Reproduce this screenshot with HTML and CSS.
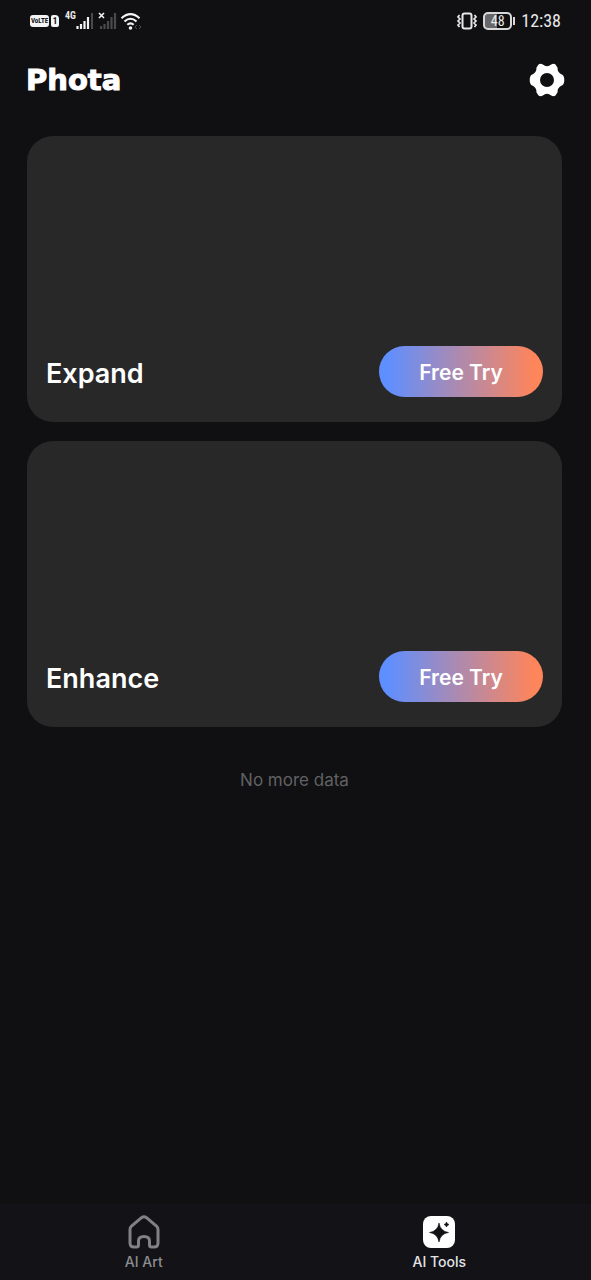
FILE: index.html
```html
<!DOCTYPE html>
<html lang="en">
<head>
<meta charset="utf-8">
<meta name="viewport" content="width=device-width, initial-scale=1">
<title>Phota</title>
<link rel="stylesheet" href="styles.css">
</head>
<body>
<div class="app">
  <div class="status">
    <div class="status-group">
      <span class="volte">VoLTE</span>
      <span class="sim">1</span>
      <span class="network">4G</span>
      <svg class="signal" width="18" height="18" viewBox="0 0 18 18" aria-hidden="true">
        <path d="M1.500 14v3M5 12v5M8.500 9v8M12 5v12" stroke="#f4f4f4" stroke-width="2.200"/>
        <path d="M16 1v16" stroke="#4a4a4b" stroke-width="2"/>
      </svg>
      <svg class="no-signal" width="20" height="18" viewBox="0 0 20 18" aria-hidden="true">
        <path d="M3 14v3M6.500 12v5M10 9v8M13.500 5v12M17 1v16" stroke="#4a4a4b" stroke-width="2.200"/>
        <path d="M1 1l5 5M6 1l-5 5" stroke="#f4f4f4" stroke-width="1.600"/>
      </svg>
      <svg width="22" height="18" viewBox="0 0 22 18" aria-hidden="true">
        <path d="M1.500 6.200Q10.500-2 19.500 6.200M4.500 9.500Q10.500 4 16.500 9.500M7.300 12.800Q10.500 10 13.700 12.800" fill="none" stroke="#f4f4f4" stroke-width="2.100"/>
        <circle cx="10.500" cy="16" r="1.800" fill="#f4f4f4"/>
        <path d="M17 13l-2 2 2 2M19 13l2 2-2 2" fill="none" stroke="#4a4a4b"/>
      </svg>
    </div>
    <div class="status-group">
      <svg width="22" height="18" viewBox="0 0 22 18" aria-hidden="true">
        <rect x="6.500" y="1.500" width="9" height="15" rx="2" fill="none" stroke="#e8e8e8" stroke-width="2"/>
        <path d="M3.500 3L2 5l2 2-2 2 2 2-2 2 1.500 2M18.500 3L20 5l-2 2 2 2-2 2 2 2-1.500 2" fill="none" stroke="#e8e8e8" stroke-width="1.700"/>
      </svg>
      <span class="battery"><span class="battery-level">48</span></span>
      <span class="clock">12:38</span>
    </div>
  </div>

  <header class="header">
    <h1 class="logo">Phota</h1>
    <button class="settings" type="button" aria-label="Settings">
      <svg width="36" height="36" viewBox="0 0 36 36" aria-hidden="true">
        <path fill="#fff" fill-rule="evenodd" d="M9.500 2.600Q11.400 1 13.800 2.600Q18 6 22.200 2.600Q24.600 1 26.500 2.600L28.600 5.800Q28 10.500 33.300 12.800Q35.300 14 35.300 18Q35.300 22 33.300 23.200Q28 25.500 28.600 30.200L26.500 33.400Q24.600 35 22.200 33.400Q18 30 13.800 33.400Q11.400 35 9.500 33.400L7.400 30.200Q8 25.500 2.700 23.200Q.7 22 .7 18Q.7 14 2.700 12.800Q8 10.500 7.400 5.800ZM18 11a7 7 0 1 0 0 14a7 7 0 1 0 0-14Z"/>
      </svg>
    </button>
  </header>

  <main class="tools">
    <section class="card">
      <h2 class="card-title">Expand</h2>
      <button class="try" type="button">Free Try</button>
    </section>
    <section class="card">
      <h2 class="card-title">Enhance</h2>
      <button class="try" type="button">Free Try</button>
    </section>
    <p class="end">No more data</p>
  </main>

  <nav class="tabs">
    <a class="tab" href="#art">
      <svg width="34" height="34" viewBox="0 0 34 34" aria-hidden="true">
        <path d="M3 14.500Q3 12.500 4.500 11.200L14.500 2.700Q17 .8 19.500 2.700L29.500 11.200Q31 12.500 31 14.500V28Q31 32 27 32H24.500Q22.500 32 22.500 30V26Q22.500 21.500 17 21.500Q11.500 21.500 11.500 26V30Q11.500 32 9.500 32H7Q3 32 3 28Z" fill="none" stroke="#818183" stroke-width="3"/>
      </svg>
      <span>AI Art</span>
    </a>
    <a class="tab tab-active" href="#tools" aria-current="page">
      <svg width="34" height="34" viewBox="0 0 34 34" aria-hidden="true">
        <rect x="1" y="1" width="32" height="32" rx="8" fill="#fff"/>
        <path d="M17 8Q18.300 16.200 26.500 17.500Q18.300 18.800 17 27Q15.700 18.800 7.500 17.500Q15.700 16.200 17 8ZM24.500 7Q25 9 27 9.500Q25 10 24.500 12Q24 10 22 9.500Q24 9 24.500 7Z" fill="#111114" stroke="#111114" stroke-width=".6" stroke-linejoin="round"/>
      </svg>
      <span>AI Tools</span>
    </a>
  </nav>
</div>
</body>
</html>
```
FILE: styles.css
```css
* {
  box-sizing: border-box;
}

body {
  margin: 0;
  background: #101012;
  color: #fff;
  font-family: Inter, sans-serif;
}

h1, h2, p {
  margin: 0;
}

button {
  border: 0;
  padding: 0;
  color: inherit;
  font-family: inherit;
  cursor: pointer;
}

.app {
  display: flex;
  flex-direction: column;
  min-height: 100vh;
}

.status {
  display: flex;
  justify-content: space-between;
  align-items: center;
  height: 41px;
  padding: 0 30px;
  color: #e8e8e8;
  font-family: "Roboto Condensed", Roboto, sans-serif;
}

.status-group {
  display: flex;
  align-items: center;
}

.volte {
  width: 19px;
  border-radius: 3px;
  background: #f4f4f4;
  color: #101012;
  font-size: 7px;
  font-weight: 700;
  line-height: 12px;
  text-align: center;
}

.sim {
  width: 8px;
  margin-left: 2px;
  border-radius: 2px 4px 2px 2px;
  background: #f4f4f4;
  color: #101012;
  font-size: 9px;
  font-weight: 700;
  line-height: 12px;
  text-align: center;
}

.network {
  align-self: flex-start;
  margin-left: 6px;
  font-size: 10px;
  font-weight: 700;
  line-height: 8px;
}

.no-signal {
  margin: 0 2px 0 4px;
}

.battery {
  display: flex;
  align-items: center;
  margin: 0 6px 0 5px;
}

.battery-level {
  width: 29px;
  border: 2px solid #d8d8d8;
  border-radius: 5px;
  background: linear-gradient(90deg, #68686a 48%, transparent 48%);
  font-size: 14px;
  line-height: 14px;
  text-align: center;
}

.battery::after {
  content: "";
  width: 2px;
  height: 8px;
  margin-left: 1px;
  background: #d8d8d8;
}

.clock {
  font-size: 18px;
  line-height: 20px;
}

.header {
  display: flex;
  justify-content: space-between;
  align-items: center;
  height: 78px;
  padding: 0 26px;
}

.logo {
  font-family: "DejaVu Sans", sans-serif;
  font-size: 29px;
  font-weight: 700;
  line-height: 32px;
  -webkit-text-stroke: 1px #fff;
}

.settings {
  display: flex;
  background: none;
}

.tools {
  display: flex;
  flex: 1;
  flex-direction: column;
  gap: 19px;
  padding: 17px 29px 0 27px;
}

.card {
  display: flex;
  justify-content: space-between;
  align-items: flex-end;
  min-height: 286px;
  padding: 24px 19px 25px;
  border-radius: 26px;
  background: #282828;
}

.card-title {
  font-size: 27px;
  font-weight: 600;
  line-height: 46px;
}

.try {
  width: 164px;
  height: 51px;
  padding-top: 2px;
  border-radius: 26px;
  background: linear-gradient(90deg, #5f8fff 5%, #ff855a 95%);
  font-size: 21px;
  font-weight: 600;
}

.end {
  margin-top: 22px;
  color: #616163;
  font-size: 17px;
  line-height: 24px;
  text-align: center;
}

.tabs {
  display: flex;
  padding: 11px 0 8px;
  background: #121217;
}

.tab {
  display: flex;
  flex: 1;
  flex-direction: column;
  align-items: center;
  gap: 3px;
  padding-right: 8px;
  color: #8e8e90;
  font-size: 14px;
  font-weight: 500;
  line-height: 20px;
  text-decoration: none;
}

.tab-active {
  color: #e4e4e6;
}
```
